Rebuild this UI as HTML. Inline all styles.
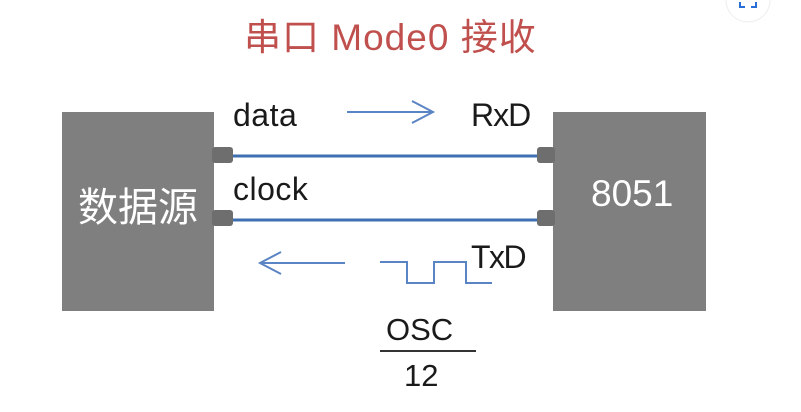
<!DOCTYPE html>
<html><head><meta charset="utf-8"><style>
body{margin:0;width:801px;height:412px;background:#fff;position:relative;overflow:hidden;font-family:"Liberation Sans","Noto Sans CJK SC",sans-serif}
.a{position:absolute}
.t{position:absolute;font-size:31px;color:#1a1a1a;line-height:1;white-space:nowrap}
</style></head><body>
<div class="t" style="left:244px;top:19px;font-size:37px;color:#c0504d;letter-spacing:1px">串口 Mode0 接收</div>
<div class="a" style="left:62px;top:112px;width:152px;height:199px;background:#7f7f7f"></div>
<div class="a" style="left:553px;top:112px;width:153px;height:199px;background:#7f7f7f"></div>
<div class="t" style="left:78px;top:188px;color:#fff;font-size:40px">数据源</div>
<div class="t" style="left:591px;top:175px;color:#fff;font-size:37px">8051</div>
<div class="a" style="left:212px;top:147px;width:21px;height:16px;background:#6e6e6e;border-radius:3px"></div>
<div class="a" style="left:212px;top:210px;width:21px;height:16px;background:#6e6e6e;border-radius:3px"></div>
<div class="a" style="left:537px;top:147px;width:18px;height:16px;background:#6e6e6e;border-radius:3px"></div>
<div class="a" style="left:537px;top:210px;width:18px;height:16px;background:#6e6e6e;border-radius:3px"></div>
<div class="t" style="left:233px;top:99px;font-size:32px;letter-spacing:0.5px">data</div>
<div class="t" style="left:471px;top:99px;font-size:32px;letter-spacing:-1px">RxD</div>
<div class="t" style="left:233px;top:173px;font-size:32px;letter-spacing:0.5px">clock</div>
<div class="t" style="left:471px;top:241px;font-size:32px;letter-spacing:-1.5px">TxD</div>
<svg class="a" style="left:0;top:0" width="801" height="412">
<g stroke="#3e6fb0" stroke-width="3" fill="none">
<line x1="233" y1="156" x2="537" y2="156"/>
<line x1="233" y1="220" x2="537" y2="220"/>
</g>
<g stroke="#5a84c4" stroke-width="2" fill="none">
<line x1="347" y1="112" x2="432" y2="112"/><polyline points="412,101 433,112 412,123"/>
<line x1="260" y1="263" x2="345" y2="263"/><polyline points="281,252 260,263 281,274"/>
<polyline points="380,262 407,262 407,283 434,283 434,262 466,262 466,283 492,283"/>
</g>
<line x1="380" y1="351" x2="476" y2="351" stroke="#333" stroke-width="2"/>
<circle cx="748" cy="0" r="22" fill="#fff" stroke="#eee"/>
<path d="M740 2v5h5M756 2v5h-5" stroke="#2a6fd6" stroke-width="2" fill="none"/>
</svg>
<div class="t" style="left:386px;top:314px;letter-spacing:0px">OSC</div>
<div class="t" style="left:404px;top:360px">12</div>
</body></html>
